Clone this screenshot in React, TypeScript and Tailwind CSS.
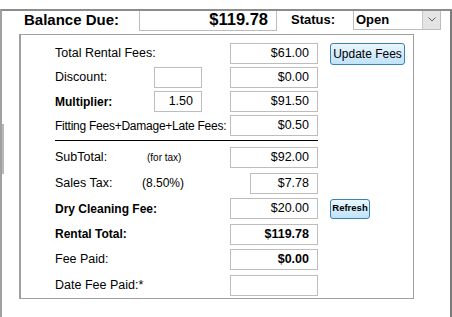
import React from "react";

const font = { fontFamily: '"Liberation Sans", Arial, sans-serif' };

function Box({ value, w = "w-[88px]", bold = false }: { value?: string; w?: string; bold?: boolean }) {
  return (
    <div
      className={`${w} h-[21px] border border-[#bdbdbd] bg-white flex items-center justify-end pr-[8px] text-[12.5px] text-black ${bold ? "font-bold" : ""}`}
    >
      {value}
    </div>
  );
}

function Row({ children }: { children: React.ReactNode }) {
  return <div className="flex items-center h-[21px]">{children}</div>;
}

export default function App() {
  return (
    <div className="w-[452px] h-[317px] bg-white relative" style={font}>
      <div className="absolute inset-0 border-[2px] border-[#a0a0a0] border-t-[#8c8c8c] border-r-[#7a7a7a] pointer-events-none" />
      {/* little gray tab on left edge */}
      <div className="absolute left-[2px] top-[115px] w-[2px] h-[50px] bg-[#b8b8b8]" />

      {/* header */}
      <div className="flex items-center h-[21px] mt-[9px] pl-[24px]">
        <div className="w-[115px] text-[15px] font-bold text-black leading-none">Balance Due:</div>
        <div className="w-[138px] h-[22px] border border-[#bdbdbd] flex items-center justify-end pr-[8px] text-[16.5px] font-bold text-black">
          $119.78
        </div>
        <div className="ml-[14px] w-[62px] text-[13px] font-bold text-black">Status:</div>
        <div className="w-[88px] h-[21px] border border-[#bdbdbd] flex items-center">
          <span className="flex-1 pl-[2px] text-[13px] font-bold text-black">Open</span>
          <div className="w-[18px] h-[19px] bg-[#e4e4e4] border-l border-[#c8c8c8] flex items-center justify-center">
            <svg width="8" height="5" viewBox="0 0 8 5">
              <path d="M0.5 0.5 L4 4 L7.5 0.5" fill="none" stroke="#606060" strokeWidth="1" />
            </svg>
          </div>
        </div>
      </div>

      {/* inner frame */}
      <div className="ml-[19px] mt-[4px] w-[395px] h-[265px] border border-[#a0a0a0] border-l-[2px] pl-[34px] pt-[8px]">
        <div className="flex flex-col gap-[3px] text-[12.5px] text-black">
          <Row>
            <div className="w-[175px]">Total Rental Fees:</div>
            <Box value="$61.00" />
            <button className="ml-[12px] w-[75px] h-[22px] rounded-[3px] border border-[#3c7fb1] bg-gradient-to-b from-[#eaf6fd] to-[#bfe3f9] text-[12px] text-black">
              Update Fees
            </button>
          </Row>
          <Row>
            <div className="w-[99px]">Discount:</div>
            <Box w="w-[48px]" />
            <div className="w-[28px]" />
            <Box value="$0.00" />
          </Row>
          <Row>
            <div className="w-[99px] font-bold text-[12px]">Multiplier:</div>
            <Box w="w-[48px]" value="1.50" />
            <div className="w-[28px]" />
            <Box value="$91.50" />
          </Row>
          <Row>
            <div className="w-[175px] text-[12px] tracking-[-0.25px] whitespace-nowrap">Fitting Fees+Damage+Late Fees:</div>
            <Box value="$0.50" />
          </Row>
        </div>

        <div className="w-[263px] h-[1px] bg-black mt-[4px] mb-[6px]" />

        <div className="flex flex-col gap-[4.5px] text-[12.5px] text-black">
          <Row>
            <div className="w-[92px]">SubTotal:</div>
            <div className="w-[83px] text-[10px]">(for tax)</div>
            <Box value="$92.00" />
          </Row>
          <Row>
            <div className="w-[87px]">Sales Tax:</div>
            <div className="w-[108px] text-[12px]">(8.50%)</div>
            <Box w="w-[68px]" value="$7.78" />
          </Row>
          <Row>
            <div className="w-[175px] font-bold text-[12px]">Dry Cleaning Fee:</div>
            <Box value="$20.00" />
            <button className="ml-[12px] w-[40px] h-[20px] rounded-[3px] border border-[#3c7fb1] bg-gradient-to-b from-[#eaf6fd] to-[#bfe3f9] text-[9.5px] font-bold text-black">
              Refresh
            </button>
          </Row>
          <Row>
            <div className="w-[175px] font-bold text-[12px]">Rental Total:</div>
            <Box value="$119.78" bold />
          </Row>
          <Row>
            <div className="w-[175px]">Fee Paid:</div>
            <Box value="$0.00" bold />
          </Row>
          <Row>
            <div className="w-[175px]">Date Fee Paid:*</div>
            <Box />
          </Row>
        </div>
      </div>
    </div>
  );
}
